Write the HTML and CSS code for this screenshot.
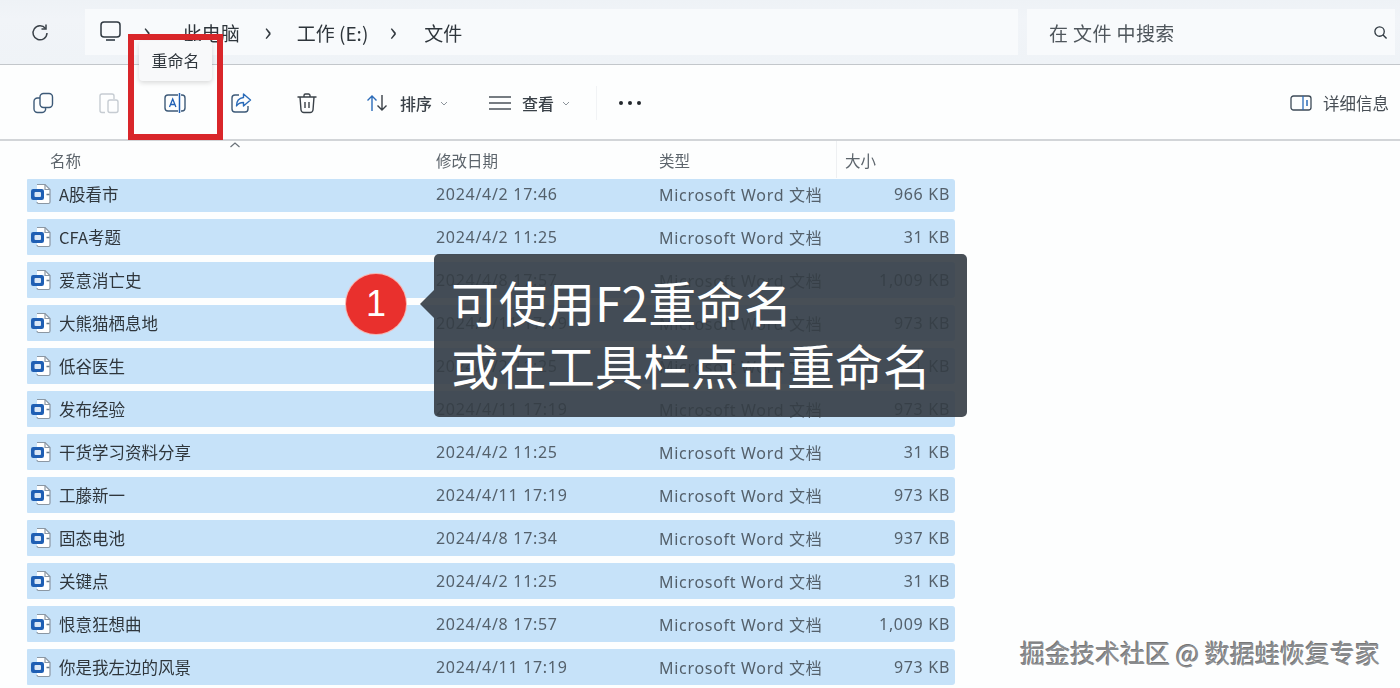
FILE: index.html
```html
<!DOCTYPE html>
<html lang="zh-CN">
<head>
<meta charset="utf-8">
<title>文件</title>
<link rel="stylesheet" href="styles.css">
</head>
<body>
<svg class="defs" width="0" height="0" aria-hidden="true">
  <symbol id="word" viewBox="0 0 24 24">
    <path d="M8 2.500h8l5 5V20a1.500 1.500 0 0 1-1.500 1.500H9.500A1.500 1.500 0 0 1 8 20" fill="#fff" stroke="#8b97a3" stroke-width="1.200"/>
    <path d="M16 2.500V7.500h5" fill="none" stroke="#8b97a3" stroke-width="1.200"/>
    <path d="M17.500 12.500h3" stroke="#6b7c8c" stroke-width="1.500"/>
    <rect x="2" y="7" width="13" height="11" rx="2.200" fill="#1f5fb4"/>
    <rect x="5.500" y="10" width="6.500" height="5" rx="1" fill="#dbe8f7"/>
  </symbol>
</svg>
<div class="page">
  <header class="topbar">
    <svg class="refresh" width="20" height="20" viewBox="0 0 20 20"><path d="M15.500 6.500A7 7 0 1 0 17 11" fill="none" stroke="#3a4148" stroke-width="1.500"/><path d="M16 2.500v4.500h-4.500" fill="none" stroke="#3a4148" stroke-width="1.500"/></svg>
    <nav class="address">
      <svg class="pc" width="21" height="21" viewBox="0 0 21 21"><rect x="1" y="1" width="19" height="15" rx="3" fill="none" stroke="#2f3840" stroke-width="1.500"/><path d="M6 19h9" stroke="#59626a" stroke-width="2"/></svg>
      <span class="sep first">›</span>
      <span class="crumb">此电脑</span>
      <span class="sep">›</span>
      <span class="crumb">工作 (E:)</span>
      <span class="sep last">›</span>
      <span class="crumb">文件</span>
    </nav>
    <div class="search">
      <span>在 文件 中搜索</span>
      <svg width="15" height="15" viewBox="0 0 16 16"><circle cx="7" cy="7" r="5" fill="none" stroke="#2f3840" stroke-width="1.400"/><path d="M10.500 10.500l4 4" stroke="#2f3840" stroke-width="1.500"/></svg>
    </div>
  </header>

  <section class="toolbar">
    <svg class="tool t-copy" width="22" height="22" viewBox="0 0 22 22"><rect x="8" y="1.500" width="12.500" height="14" rx="3.500" fill="none" stroke="#3d5a78" stroke-width="1.400"/><path d="M8 6H5.500a3.500 3.500 0 0 0-3.500 3.500V17a3.500 3.500 0 0 0 3.500 3.500H10a3.500 3.500 0 0 0 3.500-4.500" fill="none" stroke="#3d5a78" stroke-width="1.400"/></svg>
    <svg class="tool t-paste" width="22" height="22" viewBox="0 0 22 22"><path d="M7 20.500H4a2 2 0 0 1-2-2V4a2 2 0 0 1 2-2h10a2 2 0 0 1 2 2v3" fill="none" stroke="#c6ccd2" stroke-width="1.400"/><rect x="10" y="8" width="10" height="12.500" rx="2" fill="none" stroke="#c6ccd2" stroke-width="1.400"/></svg>
    <svg class="tool t-rename" width="24" height="22" viewBox="0 0 24 22"><path d="M15 3H5a3 3 0 0 0-3 3v10a3 3 0 0 0 3 3h10M18 3h1a3 3 0 0 1 3 3v10a3 3 0 0 1-3 3h-1" fill="none" stroke="#3d5a78" stroke-width="1.400"/><path d="M16.500 1v20" stroke="#1f5fb4" stroke-width="1.500"/><path d="M6.500 15l3.200-8 3.200 8M7.800 12.500h3.800" fill="none" stroke="#1f5fb4" stroke-width="1.300"/></svg>
    <svg class="tool t-share" width="22" height="22" viewBox="0 0 22 22"><path d="M9 3H5a3 3 0 0 0-3 3v11a3 3 0 0 0 3 3h10a3 3 0 0 0 3-3v-3" fill="none" stroke="#3d5a78" stroke-width="1.400"/><path d="M13.500 2l7 6-7 6v-3.500c-3.500 0-5.500 1-7 3.500 0-5 2.500-8 7-8.500z" fill="none" stroke="#2a6bb8" stroke-width="1.400" stroke-linejoin="round"/></svg>
    <svg class="tool t-trash" width="22" height="22" viewBox="0 0 22 22"><path d="M1.500 5h19M8 5V3.500A1.500 1.500 0 0 1 9.500 2h3A1.500 1.500 0 0 1 14 3.500V5M4 5l1 13a3 3 0 0 0 3 2.500h6a3 3 0 0 0 3-2.500l1-13M9 10v6M13 10v6" fill="none" stroke="#3a4148" stroke-width="1.400"/></svg>
    <div class="menu m-sort">
      <svg width="22" height="18" viewBox="0 0 22 18"><path d="M6 17V2M1.500 6.500L6 2l4.500 4.500" fill="none" stroke="#2a6bb8" stroke-width="1.400"/><path d="M16 1v15M11.500 11.500L16 16l4.500-4.500" fill="none" stroke="#3a4148" stroke-width="1.400"/></svg>
      <span>排序</span>
      <svg class="chev" width="8" height="5" viewBox="0 0 8 5"><path d="M1 1l3 3 3-3" fill="none" stroke="#8d959c" stroke-width="1"/></svg>
    </div>
    <div class="menu m-view">
      <svg width="22" height="16" viewBox="0 0 22 16"><path d="M0 2h22M0 8h22M0 14h22" stroke="#4a5259" stroke-width="1.400"/></svg>
      <span>查看</span>
      <svg class="chev" width="8" height="5" viewBox="0 0 8 5"><path d="M1 1l3 3 3-3" fill="none" stroke="#8d959c" stroke-width="1"/></svg>
    </div>
    <div class="divider"></div>
    <div class="dots"><i></i><i></i><i></i></div>
    <div class="details">
      <svg width="22" height="16" viewBox="0 0 22 16"><rect x="1" y="1" width="20" height="14" rx="2.500" fill="none" stroke="#3d4a57" stroke-width="1.300"/><path d="M13 1v14" stroke="#2a6bb8" stroke-width="1.300"/><path d="M17 5v6" stroke="#2a6bb8" stroke-width="1.500"/></svg>
      <span>详细信息</span>
    </div>
  </section>

  <main class="files">
    <div class="head">
      <span>名称</span>
      <span>修改日期</span>
      <span>类型</span>
      <span class="head-size">大小</span>
    </div>
    <div class="list">
      <div class="row"><span class="name"><svg width="24" height="24"><use href="#word"/></svg>A股看市</span><span>2024/4/2 17:46</span><span>Microsoft Word 文档</span><span class="size">966 KB</span></div>
      <div class="row"><span class="name"><svg width="24" height="24"><use href="#word"/></svg>CFA考题</span><span>2024/4/2 11:25</span><span>Microsoft Word 文档</span><span class="size">31 KB</span></div>
      <div class="row"><span class="name"><svg width="24" height="24"><use href="#word"/></svg>爱意消亡史</span><span>2024/4/8 17:57</span><span>Microsoft Word 文档</span><span class="size">1,009 KB</span></div>
      <div class="row"><span class="name"><svg width="24" height="24"><use href="#word"/></svg>大熊猫栖息地</span><span>2024/4/11 17:19</span><span>Microsoft Word 文档</span><span class="size">973 KB</span></div>
      <div class="row"><span class="name"><svg width="24" height="24"><use href="#word"/></svg>低谷医生</span><span>2024/4/2 11:25</span><span>Microsoft Word 文档</span><span class="size">31 KB</span></div>
      <div class="row"><span class="name"><svg width="24" height="24"><use href="#word"/></svg>发布经验</span><span>2024/4/11 17:19</span><span>Microsoft Word 文档</span><span class="size">973 KB</span></div>
      <div class="row"><span class="name"><svg width="24" height="24"><use href="#word"/></svg>干货学习资料分享</span><span>2024/4/2 11:25</span><span>Microsoft Word 文档</span><span class="size">31 KB</span></div>
      <div class="row"><span class="name"><svg width="24" height="24"><use href="#word"/></svg>工藤新一</span><span>2024/4/11 17:19</span><span>Microsoft Word 文档</span><span class="size">973 KB</span></div>
      <div class="row"><span class="name"><svg width="24" height="24"><use href="#word"/></svg>固态电池</span><span>2024/4/8 17:34</span><span>Microsoft Word 文档</span><span class="size">937 KB</span></div>
      <div class="row"><span class="name"><svg width="24" height="24"><use href="#word"/></svg>关键点</span><span>2024/4/2 11:25</span><span>Microsoft Word 文档</span><span class="size">31 KB</span></div>
      <div class="row"><span class="name"><svg width="24" height="24"><use href="#word"/></svg>恨意狂想曲</span><span>2024/4/8 17:57</span><span>Microsoft Word 文档</span><span class="size">1,009 KB</span></div>
      <div class="row"><span class="name"><svg width="24" height="24"><use href="#word"/></svg>你是我左边的风景</span><span>2024/4/11 17:19</span><span>Microsoft Word 文档</span><span class="size">973 KB</span></div>
    </div>
  </main>

  <div class="highlight"></div>
  <div class="tip">重命名</div>
  <svg class="sort-caret" width="12" height="6" viewBox="0 0 12 6"><path d="M1.500 5L6 1l4.500 4" fill="none" stroke="#6a7279" stroke-width="1.200"/></svg>
  <div class="badge">1</div>
  <div class="callout">可使用F2重命名<br>或在工具栏点击重命名</div>
  <div class="watermark">掘金技术社区 @ 数据蛙恢复专家</div>
</div>
</body>
</html>
```
FILE: styles.css
```css
* { box-sizing: border-box; }
html, body { margin: 0; height: 100%; }
body {
  background: #fdfefe;
  font-family: "Noto Sans", "Noto Sans CJK SC", sans-serif;
  color: #2b3238;
  overflow: hidden;
}
.defs { position: absolute; }
.page { position: relative; width: 1400px; height: 688px; overflow: hidden; }
.topbar, .toolbar, .files, .tip { filter: blur(0.35px); }

.topbar {
  height: 65px;
  display: flex;
  align-items: center;
  padding: 0 5px 0 30px;
  background: linear-gradient(#eef2f6, #f1f4f8 30%, #eff3f7);
  border-bottom: 1px solid #c3c7cb;
}
.refresh { margin-right: 35px; }
.address {
  width: 933px;
  height: 46px;
  display: flex;
  align-items: center;
  padding: 0 0 0 15px;
  background: #f8fafc;
  font-size: 19px;
  color: #2e353b;
  font-family: "Noto Sans CJK SC", sans-serif;
}
.pc { margin-bottom: 2px; }
.sep { font-size: 26px; line-height: 1; margin: -5px 25px 0 24px; color: #333a40; }
.sep.first { margin: -5px 32px 0 22px; }
.sep.last { margin: -5px 27px 0 21px; }
.crumb { white-space: nowrap; }
.search {
  width: 368px;
  height: 46px;
  margin-left: 9px;
  display: flex;
  align-items: center;
  justify-content: space-between;
  padding: 0 7px 0 22px;
  background: #f8fafc;
  font-size: 19px;
  letter-spacing: .4px;
  color: #4f565c;
  font-family: "Noto Sans CJK SC", sans-serif;
}

.toolbar {
  height: 76px;
  display: flex;
  align-items: center;
  padding: 2px 11px 0 32px;
  background: #fdfefe;
  border-bottom: 2px solid #d2d5d8;
}
.tool { flex: none; }
.t-copy { margin-right: 44px; }
.t-paste { margin-right: 43px; }
.t-rename { margin-right: 43px; }
.t-share { margin-right: 44px; }
.t-trash { margin-right: 48px; }
.menu {
  display: flex;
  align-items: center;
  font-size: 16px;
  font-family: "Noto Sans CJK SC", sans-serif;
  color: #3a4148;
}
.menu span { margin: 0 8px 0 12px; font-weight: 500; }
.m-sort { margin-right: 41px; }
.m-view span { margin-left: 11px; }
.divider { width: 1px; height: 34px; background: #f1f3f5; margin: 0 22px 0 26px; }
.dots { display: flex; gap: 5px; }
.dots i { width: 4px; height: 4px; border-radius: 50%; background: #23282d; }
.details {
  margin-left: auto;
  display: flex;
  align-items: center;
  gap: 11px;
  font-size: 16.500px;
  color: #474e55;
  font-family: "Noto Sans CJK SC", sans-serif;
}

.files { padding-left: 27px; width: 955px; }
.head {
  height: 38px;
  display: grid;
  grid-template-columns: 409px 223px 177px 1fr;
  align-items: center;
  padding-bottom: 1px;
  font-size: 15.500px;
  color: #5d656c;
  font-family: "Noto Sans CJK SC", sans-serif;
}
.head > :first-child { padding-left: 23px; }
.head-size {
  height: 100%;
  display: flex;
  align-items: center;
  padding-left: 8px;
  border-left: 1px solid #eef0f2;
}
.list { display: flex; flex-direction: column; gap: 7px; }
.row {
  height: 36px;
  flex: none;
  display: grid;
  grid-template-columns: 409px 223px 1fr auto;
  align-items: center;
  padding-right: 5px;
  background: #c6e2f9;
  font-size: 16px;
  letter-spacing: .7px;
  color: #54606b;
  border-radius: 1px 3px 3px 1px;
}
.row:first-child { height: 33px; padding-bottom: 3px; }
.name {
  display: flex;
  align-items: center;
  gap: 6px;
  padding: 0 0 1px 2px;
  font-family: "Noto Sans CJK SC", sans-serif;
  font-size: 16.500px;
  letter-spacing: 0;
  color: #2f363c;
}
.name svg { flex: none; margin-top: 1px; }
.size { text-align: right; }

.highlight {
  position: absolute;
  left: 128px; top: 34px;
  width: 95px; height: 106px;
  border: 6px solid #d9262a;
}
.tip {
  position: absolute;
  left: 139px; top: 41px;
  width: 73px; height: 40px;
  padding-bottom: 3px;
  display: flex;
  align-items: center;
  justify-content: center;
  background: #f8f9fa;
  border-radius: 4px;
  box-shadow: 0 2px 5px rgba(0,0,0,.14);
  font-size: 16px;
  font-family: "Noto Sans CJK SC", sans-serif;
  color: #2f363c;
}
.sort-caret { position: absolute; left: 229px; top: 142px; }
.badge {
  position: absolute;
  left: 346px; top: 274px;
  width: 60px; height: 60px;
  border-radius: 50%;
  display: flex;
  align-items: center;
  justify-content: center;
  background: #e9302d;
  color: #fff;
  font-size: 36px;
  box-shadow: 0 0 0 1px #f6b4b0;
  font-family: "Liberation Sans", sans-serif;
}
.callout {
  position: absolute;
  left: 434px; top: 254px;
  width: 533px; height: 163px;
  padding: 16px 0 0 17px;
  background: rgba(52, 60, 68, .9);
  border-radius: 5px;
  color: #fff;
  font-size: 48px;
  line-height: 63px;
  font-family: "Noto Sans CJK SC", sans-serif;
  white-space: nowrap;
}
.callout::before {
  content: "";
  position: absolute;
  left: -14px; top: 36px;
  border-style: solid;
  border-width: 14px 14px 14px 0;
  border-color: transparent rgba(52, 60, 68, .9) transparent transparent;
}
.watermark {
  position: absolute;
  right: 20px; top: 636px;
  font-size: 25px;
  line-height: 32px;
  color: #8a8d90;
  text-shadow: 1px 1px 0 #fff, -1px -1px 0 #777;
  font-family: "Noto Sans CJK SC", sans-serif;
  white-space: nowrap;
}
```
